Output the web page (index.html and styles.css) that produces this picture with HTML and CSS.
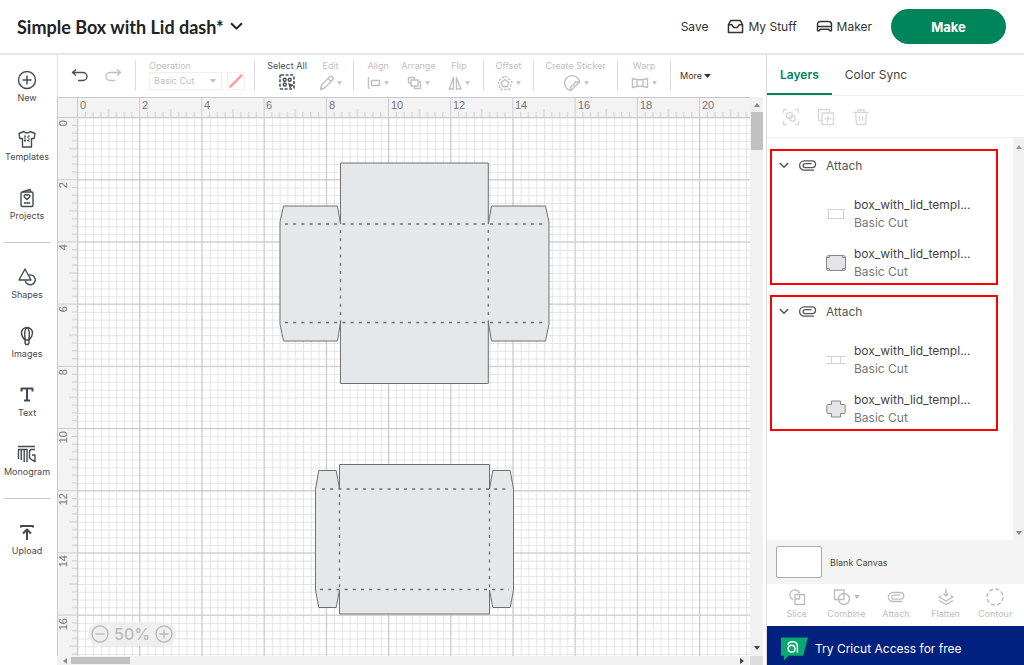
FILE: index.html
```html
<!DOCTYPE html>
<html lang="en">
<head>
<meta charset="utf-8">
<meta name="viewport" content="width=device-width, initial-scale=1">
<title>Simple Box with Lid dash</title>
<link rel="stylesheet" href="styles.css">
</head>
<body class="app">
<svg class="defs" aria-hidden="true">
  <symbol id="clip" viewBox="0 0 20 14"><path d="M17 12H6.500a5 5 0 0 1 0-10h8.500a3.600 3.600 0 0 1 0 7.300H7.500a2.200 2.200 0 0 1 0-4.400H14.500"/></symbol>
  <symbol id="caret" viewBox="0 0 6 4"><path d="M0 0h6L3 4z"/></symbol>
  <symbol id="chevron" viewBox="0 0 12 8"><path d="M1 1l5 5 5-5"/></symbol>
</svg>

<header class="topbar">
  <button class="project"><span>Simple Box with Lid dash*</span><svg class="icon chev" width="13" height="9"><use href="#chevron"/></svg></button>
  <nav class="account">
    <button class="link">Save</button>
    <button class="link"><svg class="icon bold" width="17" height="15" viewBox="0 0 18 16"><path d="M1.500 6L4 1.500h10L16.500 6v8.500h-15zM1.500 6H5l2 3h4l2-3h3.500"/></svg>My Stuff</button>
    <button class="link"><svg class="icon bold" width="17" height="13" viewBox="0 0 18 14"><path d="M1.500 7V4.500a3 3 0 0 1 3-3h9a3 3 0 0 1 3 3V7zM1.500 7v4.500h2l1-1.500h9l1 1.500h2V7"/></svg>Maker</button>
    <button class="make">Make</button>
  </nav>
</header>

<div class="body">
  <nav class="rail">
    <div class="rail-group">
      <button class="rail-item"><svg class="icon" width="20" height="20" viewBox="0 0 20 20"><circle cx="10" cy="10" r="8.500"/><path d="M10 5.500v9M5.500 10h9"/></svg>New</button>
      <button class="rail-item"><svg class="icon" width="20" height="20" viewBox="0 0 20 20"><path d="M7 2.500L2 4.500l.8 5h2.700v8.500h9V9.500h2.700l.8-5-5-2c-1 2-5 2-6 0z"/><path stroke-width="1" stroke-dasharray="2 1" d="M7 8h6M7 11.500h6M8 6v7M12 6v7"/></svg>Templates</button>
      <button class="rail-item"><svg class="icon" width="20" height="20" viewBox="0 0 20 20"><rect x="4" y="4" width="12" height="14.500" rx="1.500"/><path d="M5 4l8-2.500 1 2.500M10 11.500L7.300 9a1.500 1.500 0 0 1 2.700-1.500A1.500 1.500 0 0 1 12.700 9zM7 15h6"/></svg>Projects</button>
    </div>
    <hr class="rail-line">
    <div class="rail-group">
      <button class="rail-item"><svg class="icon" width="20" height="20" viewBox="0 0 20 20"><path d="M8 2l6 11H2z"/><path d="M11.500 8.200a5 5 0 1 1-3.200 5.300"/></svg>Shapes</button>
      <button class="rail-item"><svg class="icon" width="20" height="20" viewBox="0 0 20 20"><path d="M8 14C6 12 4.500 10 4.500 7a5.500 5.500 0 0 1 11 0c0 3-1.500 5-3.500 7zM8.500 14C7 8 7 4 10 1.500M11.500 14C13 8 13 4 10 1.500M8 14v3l1 1.500h2l1-1.500v-3"/></svg>Images</button>
      <button class="rail-item"><svg class="icon" width="20" height="20" viewBox="0 0 20 20"><path class="heavy" d="M4.500 6.500V3.500h11v3M10 3.500v12M7 15.500h6"/></svg>Text</button>
      <button class="rail-item"><svg class="icon" width="20" height="20" viewBox="0 0 20 20"><path d="M1 2.500h17M1.500 15V5.500H10V18M4.300 5.500V16M7.200 5.500V18M18 5.500h-3.500q-2 0-2 3V13q0 2 5.500 4.500V11h-3"/></svg>Monogram</button>
    </div>
    <hr class="rail-line">
    <div class="rail-group">
      <button class="rail-item"><svg class="icon" width="20" height="20" viewBox="0 0 20 20"><path class="heavy" d="M4 4.500V3h12v1.500M10 17V7M6 10.500l4-4 4 4"/></svg>Upload</button>
    </div>
  </nav>

  <main class="work">
    <div class="toolbar">
      <div class="tools history">
        <button class="tool dark" aria-label="Undo"><svg class="icon" width="18" height="16" viewBox="0 0 18 16"><path d="M5 2L1.500 5 5 8M1.500 5H12a4 4 0 0 1 0 8H7"/></svg></button>
        <button class="tool" aria-label="Redo"><svg class="icon" width="18" height="16" viewBox="0 0 18 16"><path d="M13 2l3.500 3L13 8M16.500 5H6a4 4 0 0 0 0 8h5"/></svg></button>
      </div>
      <div class="tools operation">
        <label for="op">Operation</label>
        <div class="op-row">
          <span class="select-wrap"><select id="op"><option>Basic Cut</option></select><svg class="caret" width="6" height="4"><use href="#caret"/></svg></span>
          <button class="swatch" aria-label="Pen color"><svg width="18" height="18" viewBox="0 0 18 18"><path d="M2 16L16 2"/></svg></button>
        </div>
      </div>
      <div class="tools pair">
        <button class="tool dark"><span>Select All</span><svg class="icon" width="17" height="17" viewBox="0 0 17 17"><rect x="1" y="1" width="14" height="14" rx="1" stroke-dasharray="3 1.600" stroke-width="1.600"/><circle cx="5.700" cy="5.700" r="1.500"/><circle cx="10.700" cy="5.700" r="1.500"/><circle cx="5.700" cy="10.500" r="1.500"/><path class="solid" d="M9 9l6 2-2.500 1.500L11 15z"/></svg></button>
        <button class="tool"><span>Edit</span><span class="glyph"><svg class="icon" width="15" height="16" viewBox="0 0 15 16"><path d="M1.500 14.500l1-4.500 8-8a2 2 0 0 1 3 3l-8 8zM9 3.500l3 3"/></svg><svg class="caret" width="5" height="4"><use href="#caret"/></svg></span></button>
      </div>
      <div class="tools triple">
        <button class="tool"><span>Align</span><span class="glyph"><svg class="icon" width="14" height="14" viewBox="0 0 14 14"><path d="M1.500 1v12"/><rect x="4.500" y="4.500" width="8" height="5"/></svg><svg class="caret" width="5" height="4"><use href="#caret"/></svg></span></button>
        <button class="tool"><span>Arrange</span><span class="glyph"><svg class="icon" width="15" height="14" viewBox="0 0 15 14"><path d="M4 7H1.500V1.500h6V4M11 6h2.500v6.500h-6V10"/><rect x="4" y="4" width="7" height="6"/></svg><svg class="caret" width="5" height="4"><use href="#caret"/></svg></span></button>
        <button class="tool"><span>Flip</span><span class="glyph"><svg class="icon" width="14" height="14" viewBox="0 0 14 14"><path d="M5.500 1.500V13H1.200zM8.500 1.500V13h4.300z"/></svg><svg class="caret" width="5" height="4"><use href="#caret"/></svg></span></button>
      </div>
      <div class="tools offset">
        <button class="tool"><span>Offset</span><span class="glyph"><svg class="icon" width="16" height="16" viewBox="0 0 16 16"><path stroke-dasharray="2.500 1.500" d="M8 1l7 5.500-2.500 8h-9L1 6.500z"/><path d="M8 4.500l3.800 3-1.500 4H5.700l-1.500-4z"/></svg><svg class="caret" width="5" height="4"><use href="#caret"/></svg></span></button>
      </div>
      <div class="tools sticker">
        <button class="tool"><span>Create Sticker</span><span class="glyph"><svg class="icon" width="18" height="18" viewBox="0 0 18 18"><path d="M8 16.500a7.500 7.500 0 1 1 8.500-8.500zM8 16.500c-1-4 0-5 3-5.500l1-3h4.500"/></svg><svg class="caret" width="5" height="4"><use href="#caret"/></svg></span></button>
      </div>
      <div class="tools warp">
        <button class="tool"><span>Warp</span><span class="glyph"><svg class="icon" width="18" height="12" viewBox="0 0 18 12"><path d="M1.500 1.500Q9 4 16.500 1.500V10.500Q9 8 1.500 10.500zM6 2.500v7M12 2.500v7"/></svg><svg class="caret" width="5" height="4"><use href="#caret"/></svg></span></button>
      </div>
      <div class="more"><button class="more-btn">More<svg class="caret" width="7" height="4" viewBox="0 0 6 4" preserveAspectRatio="none"><path d="M0 0h6L3 4z"/></svg></button></div>
    </div>

    <div class="canvas">
      <div class="mat">
        <svg class="mat-art" width="100%" height="100%">
          <defs>
            <pattern id="minor" x="20.500" y="20.500" width="7.775" height="7.775" patternUnits="userSpaceOnUse"><path class="g-minor" d="M0 .5h7.775M.5 0v7.775"/></pattern>
            <pattern id="major" x="20" y="20" width="62.200" height="62.200" patternUnits="userSpaceOnUse"><path class="g-major" d="M0 .5h62.200M.5 0v62.200"/></pattern>
            <pattern id="ticks-x" x="20" y="0" width="62.200" height="20" patternUnits="userSpaceOnUse"><path class="tick" d="M.5 0v20M8.300 15v5M16 15v5M23.800 15v5M31.600 12v8M39.400 15v5M47.200 15v5M55 15v5"/></pattern>
            <pattern id="ticks-y" x="0" y="20" width="20" height="62.200" patternUnits="userSpaceOnUse"><path class="tick" d="M0 .5h20M15 8.300h5M15 16h5M15 23.800h5M12 31.600h8M15 39.400h5M15 47.200h5M15 55h5"/></pattern>
          </defs>
          <rect width="100%" height="100%" fill="url(#minor)"/>
          <rect width="100%" height="100%" fill="url(#major)"/>
          <rect class="ruler" width="100%" height="20"/>
          <rect class="ruler" width="20" height="100%"/>
          <rect x="20" width="2000" height="20" fill="url(#ticks-x)"/>
          <rect y="20" width="20" height="2000" fill="url(#ticks-y)"/>
          <path class="edge" d="M0 .5h3000M0 20.500h3000M20.500 0v3000M.5 0v3000"/>
          <g class="num">
            <text x="23" y="12">0</text><text x="85" y="12">2</text><text x="147" y="12">4</text><text x="209" y="12">6</text><text x="272" y="12">8</text><text x="334" y="12">10</text><text x="396" y="12">12</text><text x="458" y="12">14</text><text x="521" y="12">16</text><text x="583" y="12">18</text><text x="645" y="12">20</text>
          </g>
          <g class="num side">
            <text transform="translate(10 23) rotate(-90)">0</text><text transform="translate(10 85) rotate(-90)">2</text><text transform="translate(10 147) rotate(-90)">4</text><text transform="translate(10 209) rotate(-90)">6</text><text transform="translate(10 272) rotate(-90)">8</text><text transform="translate(10 334) rotate(-90)">10</text><text transform="translate(10 396) rotate(-90)">12</text><text transform="translate(10 458) rotate(-90)">14</text><text transform="translate(10 521) rotate(-90)">16</text>
          </g>
          <g transform="translate(-57 -97)">
            <path class="part" d="M340.500 163H488.300V224L491.500 206H545.500L549 222V324L545.500 341H491.500L488.300 322V383.500H340.500V322L337.500 341H283.500L280 324V222L283.500 206H337.500L340.500 224Z"/>
            <path class="score" d="M285 224H545M285 322.500H545M340.500 230V322M488.300 230V322"/>
            <path class="part" d="M339.500 464.500H489.500V489L492.800 470.500H510.200L513.500 489V590L510.200 607.500H492.800L489.500 590V614H339.500V590L336.200 607.500H318.800L315.500 590V489L318.800 470.500H336.200L339.500 489Z"/>
            <path class="score" d="M322 489H509M320 589.500H509M339.500 494V588M489.500 494V588"/>
          </g>
        </svg>
        <div class="zoom">
          <button aria-label="Zoom out"><svg class="icon" width="18" height="18" viewBox="0 0 18 18"><circle cx="9" cy="9" r="8"/><path d="M4.500 9h9"/></svg></button>
          <span>50%</span>
          <button aria-label="Zoom in"><svg class="icon" width="18" height="18" viewBox="0 0 18 18"><circle cx="9" cy="9" r="8"/><path d="M4.500 9h9M9 4.500v9"/></svg></button>
        </div>
      </div>
      <div class="vbar"><svg class="caret up" width="6" height="4"><use href="#caret"/></svg><i class="thumb"></i><svg class="caret end" width="6" height="4"><use href="#caret"/></svg></div>
      <div class="hbar"><svg class="caret" width="4" height="6" viewBox="0 0 4 6"><path d="M4 0v6L0 3z"/></svg><i class="thumb"></i><svg class="caret end" width="4" height="6" viewBox="0 0 4 6"><path d="M0 0v6l4-3z"/></svg></div>
      <div class="corner"></div>
    </div>
  </main>

  <aside class="panel">
    <div class="tabs"><button class="tab active">Layers</button><button class="tab">Color Sync</button></div>
    <div class="actions">
      <button aria-label="Group"><svg class="icon" width="18" height="18" viewBox="0 0 18 18"><path d="M1.500 5V1.500H5M13 1.500h3.500V5M16.500 13v3.500H13M5 16.500H1.500V13"/><circle cx="7.500" cy="7.500" r="3"/><rect x="8" y="8" width="5" height="5" rx="1"/></svg></button>
      <button aria-label="Duplicate"><svg class="icon" width="18" height="18" viewBox="0 0 18 18"><path d="M5 12.500H1.500v-11h11V5"/><rect x="5" y="5" width="11.500" height="11.500"/><path d="M10.700 7.500v6.500M7.500 10.700H14"/></svg></button>
      <button aria-label="Delete"><svg class="icon" width="18" height="18" viewBox="0 0 18 18"><path d="M1 4.500h16M6 4.500V2h6v2.500M3.500 4.500l1 12h9l1-12M7.500 8v5M10.500 8v5"/></svg></button>
    </div>
    <div class="list">
      <div class="groups">
        <section class="group">
          <button class="group-head"><svg class="icon chev" width="10" height="7"><use href="#chevron"/></svg><svg class="icon" width="19" height="13"><use href="#clip"/></svg>Attach</button>
          <div class="layer"><svg class="faint" width="20" height="20" viewBox="0 0 20 20"><path d="M2.500 5.500h15v9h-15zM1 5.500h18M1 14.500h18"/></svg><div class="names"><span>box_with_lid_templ...</span><small>Basic Cut</small></div></div>
          <div class="layer"><svg class="mini" width="20" height="20" viewBox="0 0 20 20"><rect x=".5" y="2.500" width="19" height="15" rx="2"/><path d="M3.500 2.500v2h-3M16.500 2.500v2h3M3.500 17.500v-2h-3M16.500 17.500v-2h3"/></svg><div class="names"><span>box_with_lid_templ...</span><small>Basic Cut</small></div></div>
        </section>
        <section class="group">
          <button class="group-head"><svg class="icon chev" width="10" height="7"><use href="#chevron"/></svg><svg class="icon" width="19" height="13"><use href="#clip"/></svg>Attach</button>
          <div class="layer"><svg class="faint" width="20" height="20" viewBox="0 0 20 20"><path d="M.5 6.500h19M.5 13.500h19M5.500 6.500v7M14.500 6.500v7"/></svg><div class="names"><span>box_with_lid_templ...</span><small>Basic Cut</small></div></div>
          <div class="layer"><svg class="mini" width="20" height="20" viewBox="0 0 20 20"><path d="M5.500 2h9v3.500h4l.7 1.500v6l-.7 1.500h-4V18h-9v-3.500h-4L.8 13V7l.7-1.500h4z"/></svg><div class="names"><span>box_with_lid_templ...</span><small>Basic Cut</small></div></div>
        </section>
      </div>
      <div class="list-bar"><svg class="caret up" width="6" height="4"><use href="#caret"/></svg><svg class="caret end" width="6" height="4"><use href="#caret"/></svg></div>
    </div>
    <div class="blank"><i class="chip"></i>Blank Canvas</div>
    <div class="ops">
      <button><svg class="icon" width="18" height="18" viewBox="0 0 18 18"><path d="M5 11.500A5 5 0 1 1 11.500 5"/><path d="M7 6.500h9.500v10H7z"/><path d="M7 11h4.500V6.500"/></svg>Slice</button>
      <button><span class="glyph"><svg class="icon" width="18" height="18" viewBox="0 0 18 18"><rect x="1.500" y="2" width="9.500" height="9.500"/><circle cx="11" cy="11" r="5.500"/></svg><svg class="caret" width="6" height="4"><use href="#caret"/></svg></span>Combine</button>
      <button><svg class="icon" width="18" height="18"><use href="#clip"/></svg>Attach</button>
      <button><svg class="icon" width="18" height="18" viewBox="0 0 18 18"><path d="M9 1v7M6.500 5.500L9 8l2.500-2.500M4.500 7.500L2 9l7 4 7-4-2.500-1.500M2 12.500l7 4 7-4"/></svg>Flatten</button>
      <button><svg class="icon" width="18" height="18" viewBox="0 0 18 18"><circle cx="9" cy="9" r="8" stroke-dasharray="4 2.280"/></svg>Contour</button>
    </div>
    <a class="promo" href="#access"><svg width="27" height="24" viewBox="0 0 28 24"><path class="flag" d="M0 0h28l-5 19H8l-5 5v-5H0z"/><path class="mark" d="M7 7.500C8.500 3.500 17 3 17 9.500V15.500"/><circle class="mark" cx="11" cy="11.700" r="3.500"/></svg>Try Cricut Access for free</a>
  </aside>
</div>
</body>
</html>
```
FILE: styles.css
```css
* { box-sizing: border-box; }
body { margin: 0; }
.app { display: flex; flex-direction: column; height: 100vh; overflow: hidden; background: #fff; color: #444; font-family: Inter, "Liberation Sans", sans-serif; font-size: 12px; }
button { display: inline-flex; align-items: center; padding: 0; border: 0; background: none; color: inherit; font: inherit; white-space: nowrap; }
svg { display: block; flex: none; }
.defs { position: absolute; width: 0; height: 0; }
.icon { fill: none; stroke: currentColor; stroke-width: 1.4; stroke-linejoin: round; }
.icon .heavy { stroke-width: 2; }
.icon .solid { fill: currentColor; stroke: none; }
.caret { fill: currentColor; }
.up { transform: rotate(180deg); }

.topbar { display: flex; align-items: center; justify-content: space-between; height: 55px; padding: 0 18px 0 17px; border-bottom: 2px solid #e6e6e6; }
.project { gap: 6px; color: #222; font-family: Lato, sans-serif; font-size: 18px; font-weight: 700; }
.chev { stroke-width: 1.8; }
.account { display: flex; align-items: center; }
.link { gap: 4px; margin-right: 19px; color: #333; font-size: 12px; }
.bold { stroke-width: 1.6; }
.make { justify-content: center; width: 115px; height: 35px; border-radius: 18px; background: #00855b; color: #fff; font-size: 13px; font-weight: 700; }

.body { display: grid; grid-template-columns: 57px minmax(0, 1fr) 258px; flex: 1; min-height: 0; }
.rail { display: flex; flex-direction: column; padding-top: 15px; }
.rail-group { display: flex; flex-direction: column; gap: 25px; padding-right: 3px; }
.rail-item { flex-direction: column; gap: 2px; color: #444a52; font-size: 9px; line-height: 12px; }
.rail-line { width: 46px; height: 1px; margin: 20px 0 24px 4px; border: 0; background: #c8c8c8; }

.work { display: flex; flex-direction: column; min-width: 0; }
.toolbar { display: flex; height: 42px; padding-top: 5px; border-left: 1px solid #e2e2e2; color: #c0c0c0; font-size: 9px; line-height: 12px; }
.tools { display: flex; height: 31px; border-right: 1px solid #ddd; }
.tool { flex: 1; flex-direction: column; justify-content: space-between; height: 31px; }
.tool > svg, .tool .glyph { height: 17px; }
.glyph { display: flex; align-items: center; gap: 3px; }
.dark { color: #4a4f58; }
.history { width: 78px; padding: 0 6px; }
.history .tool { justify-content: center; }
.operation { flex-direction: column; width: 119px; padding-left: 13px; }
.op-row { display: flex; gap: 5px; }
.select-wrap { display: flex; align-items: center; width: 73px; height: 18px; padding-right: 5px; border: 1px solid #eee; }
select { flex: 1; min-width: 0; padding: 0 0 0 4px; border: 0; background: none; color: inherit; font: inherit; appearance: none; }
.swatch { border: 1px solid #f0f0f0; }
.swatch svg { width: 16px; height: 16px; stroke: #f6a898; stroke-width: 3; }
.pair { width: 99px; padding-left: 11px; }
.pair .tool:first-child { flex: 0 0 42px; }
.triple { width: 130px; padding: 0 4px; }
.offset { width: 50px; }
.sticker { width: 84px; }
.warp { width: 53px; }
.more { display: flex; align-items: center; padding-left: 9px; height: 31px; }
.more-btn { gap: 2px; color: #333; }

.canvas { display: grid; grid-template: minmax(0, 1fr) 9px / minmax(0, 1fr) 13px; flex: 1; min-height: 0; margin-right: 3px; }
.mat { position: relative; overflow: hidden; }
.mat-art { width: 100%; height: 100%; }
.g-minor { stroke: #e4e4e4; fill: none; }
.g-major { stroke: #c9c9c9; fill: none; }
.ruler { fill: #f3f3f3; }
.tick { stroke: #ccc; fill: none; }
.edge { stroke: #c9c9c9; }
.num { fill: #777; font: 11px "Liberation Sans", sans-serif; }
.side { text-anchor: end; }
.part { fill: #e6e7e8; stroke: #6f7072; stroke-width: 1; }
.score { fill: none; stroke: #6f7072; stroke-width: 1.3; stroke-dasharray: 3 5.2; }
.zoom { position: absolute; left: 31px; bottom: 10px; display: flex; align-items: center; gap: 5px; height: 24px; padding: 0 3px; border-radius: 12px; background: #eeee; color: #bbb; font-size: 16px; font-weight: 500; }
.vbar { display: flex; flex-direction: column; align-items: center; padding: 6px 0 6px; background: #f1f1f1; color: #888; }
.vbar .thumb { width: 12px; height: 38px; margin-top: 5px; background: #c1c1c1; }
.end { margin-top: auto; color: #444; }
.hbar { display: flex; align-items: center; padding: 0 6px; background: #f1f1f1; color: #888; }
.hbar .thumb { width: 59px; height: 7px; margin-left: 4px; background: #c1c1c1; }
.hbar .end { margin: 0 0 0 auto; }
.corner { background: #ddd; }

.panel { display: flex; flex-direction: column; min-width: 0; border-left: 1px solid #ddd; }
.tabs { display: flex; height: 41px; border-bottom: 1px solid #eee; }
.tab { padding: 0 13px; border-bottom: 2px solid transparent; font-size: 12px; }
.active { color: #00855b; font-weight: 600; border-color: #00855b; }
.actions { display: flex; align-items: center; gap: 17px; height: 42px; padding-left: 15px; border-bottom: 1px solid #eee; color: #d9d9d9; }
.list { display: flex; flex: 1; min-height: 0; }
.groups { flex: 1; padding: 11px 15px 0 3px; }
.group { height: 136px; margin-bottom: 10px; border: 2px solid #ff0000; }
.group-head { gap: 9px; height: 28px; padding-left: 7px; margin-bottom: 17px; color: #555; font-size: 12px; }
.layer { display: flex; align-items: center; gap: 8px; padding-left: 54px; margin-bottom: 14px; }
.names { display: flex; flex-direction: column; font-size: 12px; line-height: 18px; }
.names small { font-size: 12px; line-height: 17px; color: #777; }
.faint { fill: none; stroke: #d5d5d5; }
.mini { fill: #e3e5e9; stroke: #888; }
.list-bar { display: flex; flex-direction: column; align-items: center; width: 11px; padding: 7px 0 5px; background: #f1f1f1; color: #999; }
.list-bar .end { color: #888; }
.blank { display: flex; align-items: center; gap: 8px; height: 44px; padding-left: 9px; background: #f4f4f4; color: #444; font-size: 9px; }
.chip { width: 46px; height: 32px; border: 1px solid #aaa; border-radius: 2px; background: #fff; }
.ops { display: grid; grid-template-columns: repeat(5, 1fr); height: 42px; padding: 4px 4px 0 5px; color: #bdbdbd; font-size: 9px; line-height: 12px; }
.ops > button { flex-direction: column; gap: 2px; height: 32px; }
.promo { display: flex; align-items: center; gap: 7px; height: 39px; padding: 6px 0 0 14px; background: #00217d; color: #fff; font-size: 12px; text-decoration: none; white-space: nowrap; }
.flag { fill: #0aa870; }
.mark { fill: none; stroke: #fff; stroke-width: 1.5; }
```
